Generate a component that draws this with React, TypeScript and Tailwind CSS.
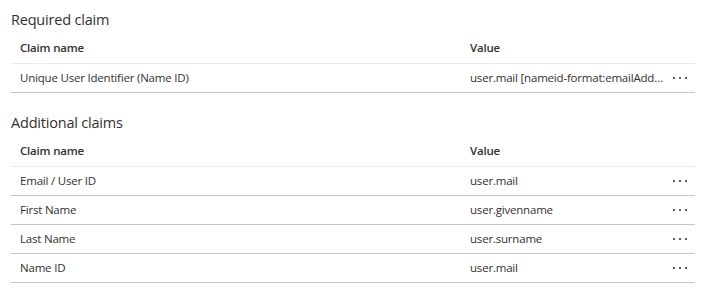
type Claim = { name: string; value: string };

const required: Claim[] = [
  { name: "Unique User Identifier (Name ID)", value: "user.mail [nameid-format:emailAddress]" },
];

const additional: Claim[] = [
  { name: "Email / User ID", value: "user.mail" },
  { name: "First Name", value: "user.givenname" },
  { name: "Last Name", value: "user.surname" },
  { name: "Name ID", value: "user.mail" },
];

export default function App() {
  return (
    <div className="min-h-screen w-[714px] bg-white px-[11px] pt-[10px] font-['Segoe_UI','Open_Sans',sans-serif] text-[#323130]">
      <ClaimTable title="Required claim" rows={required} />
      <div className="mt-[20px]">
        <ClaimTable title="Additional claims" rows={additional} />
      </div>
    </div>
  );
}

function ClaimTable({ title, rows }: { title: string; rows: Claim[] }) {
  return (
    <section className="w-[684px]">
      <h2 className="h-[20px] text-[14.5px] leading-[20px] tracking-[-0.2px]">{title}</h2>
      <div className="mt-[3px] flex h-[31px] items-center border-b border-[#edebe9] text-[11.5px] font-semibold tracking-[-0.2px]">
        <div className="w-[450px] pl-[9px]">Claim name</div>
        <div className="pl-[9px]">Value</div>
      </div>
      {rows.map((row) => (
        <div key={row.name} className="flex h-[29px] items-center border-b border-[#c8c6c4] text-[11.5px] tracking-[-0.2px]">
          <div className="w-[450px] pl-[9px]">{row.name}</div>
          <div className="w-[204px] truncate pl-[9px]">{row.value}</div>
          <div className="flex w-[30px] justify-center">
            <Dots />
          </div>
        </div>
      ))}
    </section>
  );
}

function Dots() {
  return (
    <span className="flex items-center gap-[4px]">
      <span className="h-[2px] w-[2px] bg-[#605e5c]" />
      <span className="h-[2px] w-[2px] bg-[#605e5c]" />
      <span className="h-[2px] w-[2px] bg-[#605e5c]" />
    </span>
  );
}
